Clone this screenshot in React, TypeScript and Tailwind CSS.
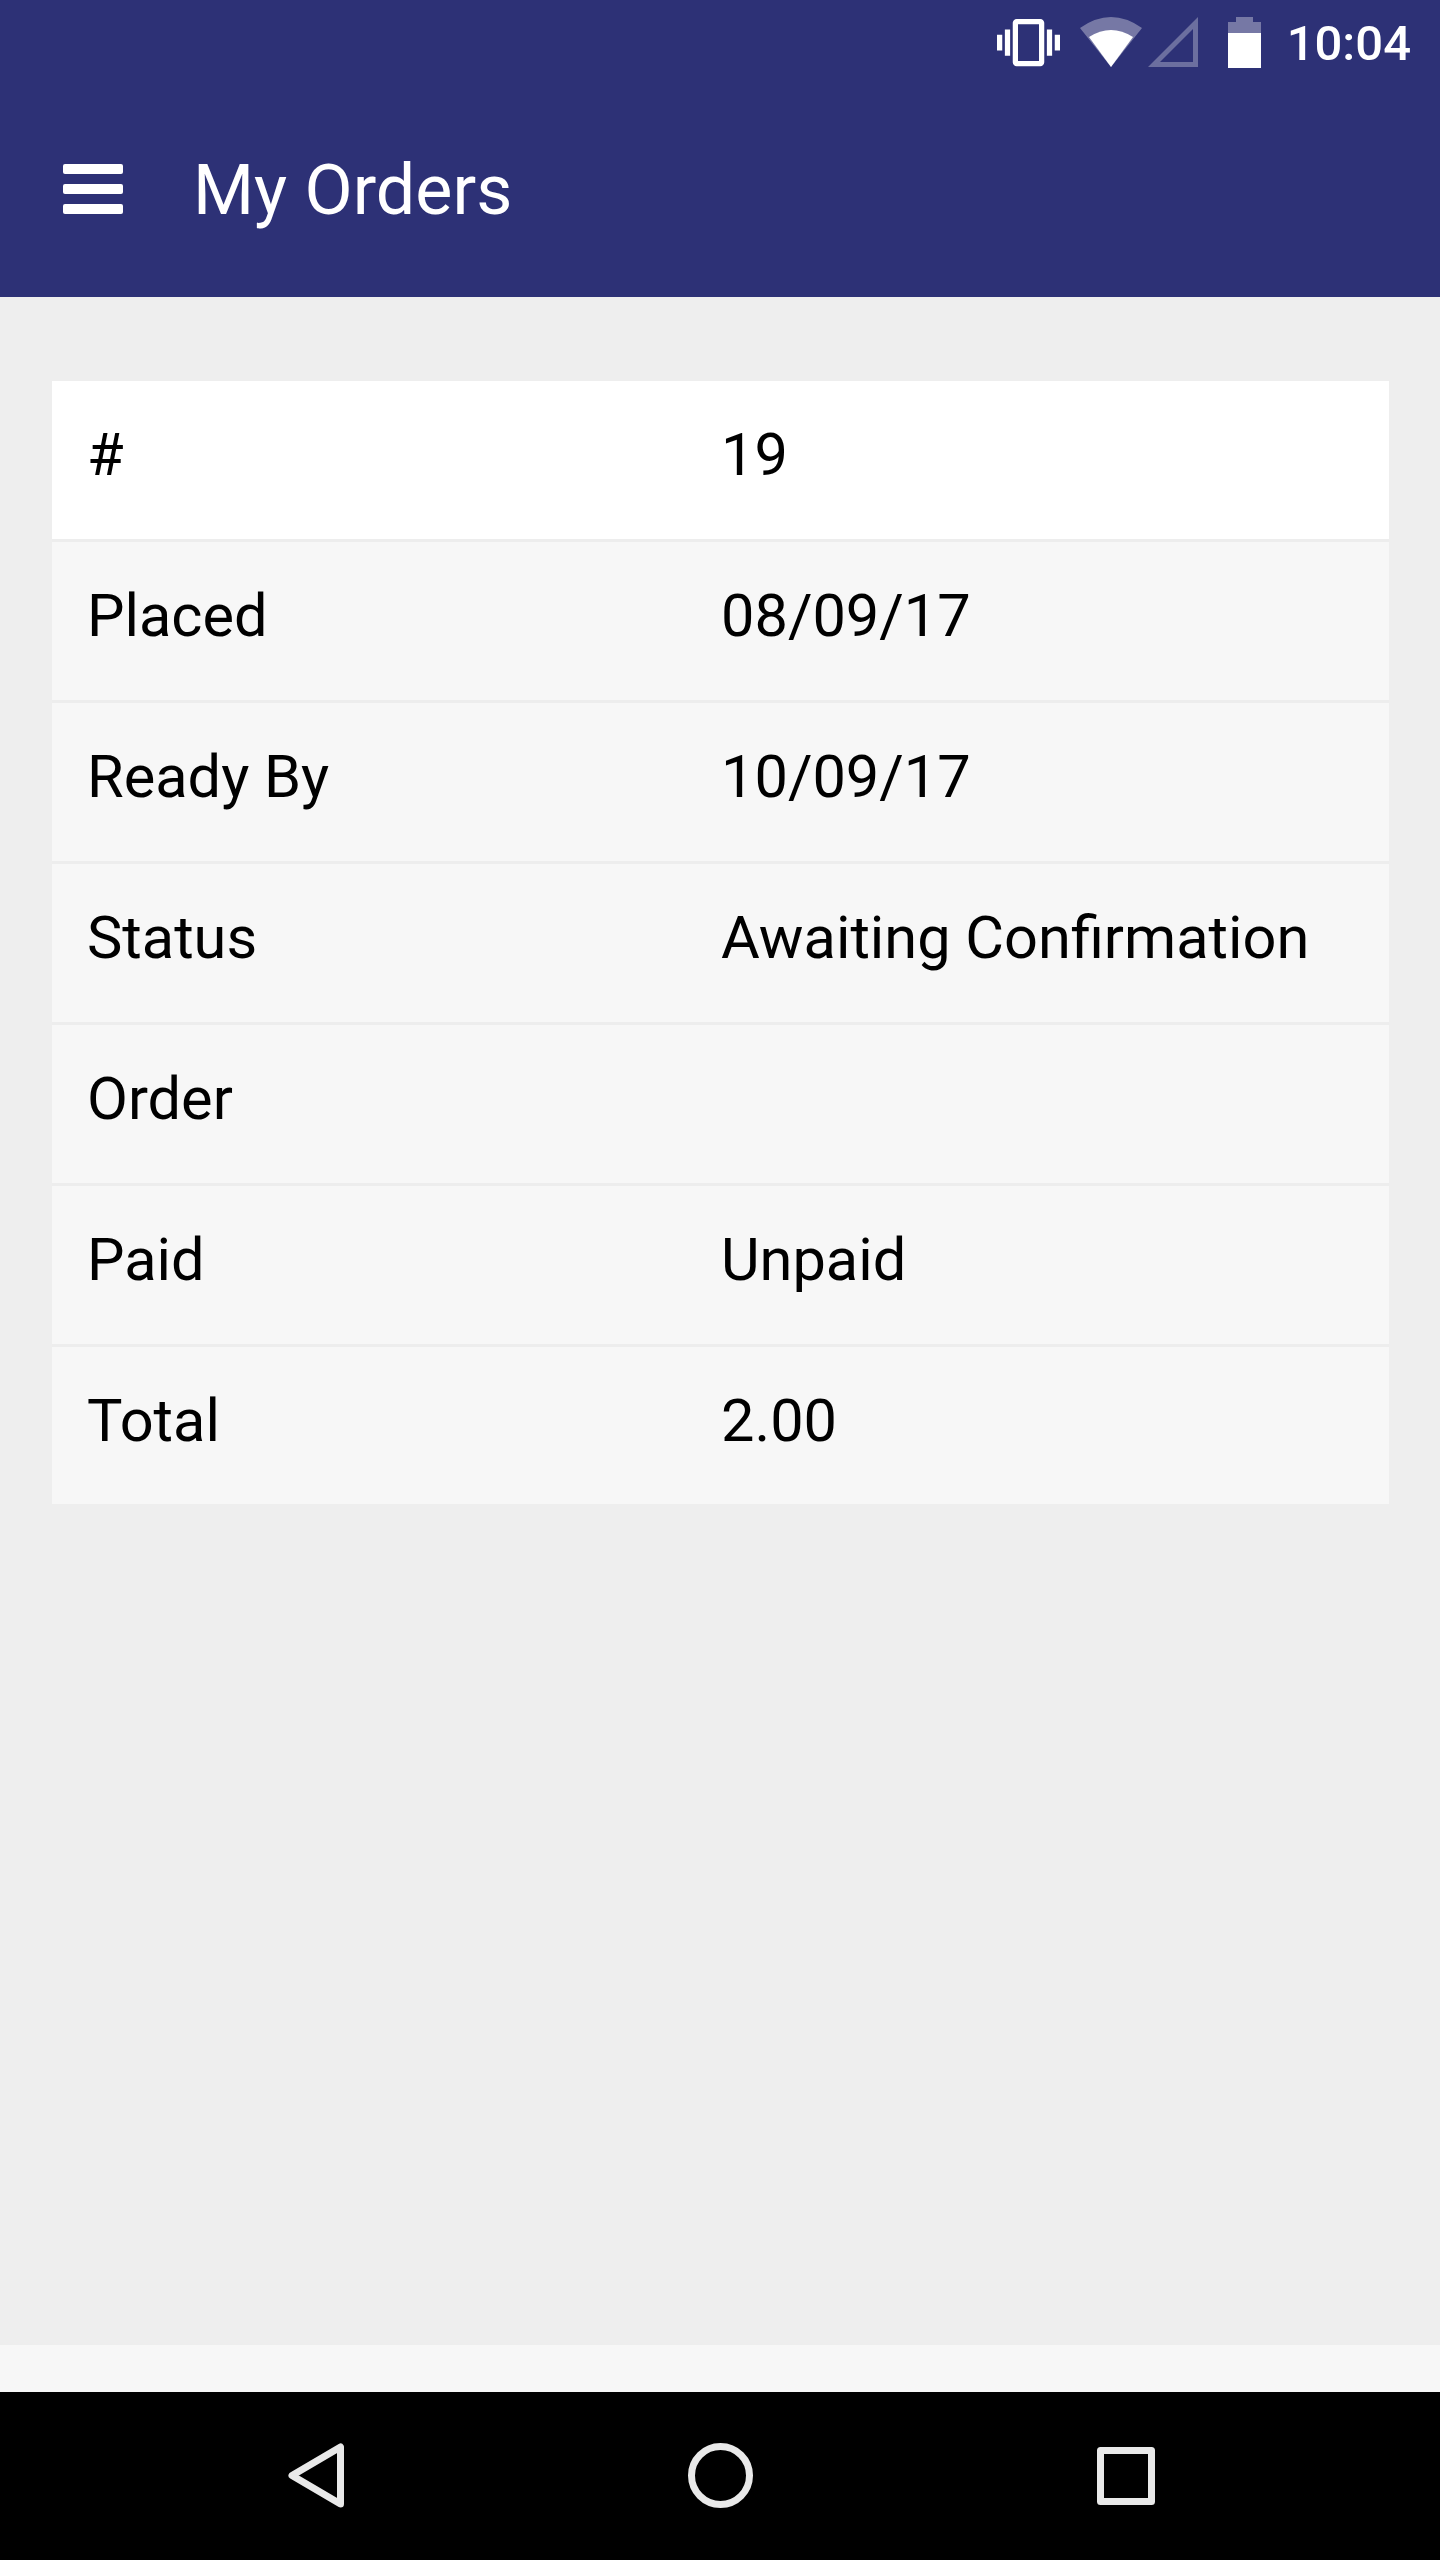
import React from 'react';

const rows = [
  { label: '#', value: '19' },
  { label: 'Placed', value: '08/09/17' },
  { label: 'Ready By', value: '10/09/17' },
  { label: 'Status', value: 'Awaiting Confirmation' },
  { label: 'Order', value: '' },
  { label: 'Paid', value: 'Unpaid' },
  { label: 'Total', value: '2.00' },
];

const StatusIcons = () => (
  <div className="flex items-center">
    {/* vibrate */}
    <svg width="63" height="63" viewBox="0 0 24 24" fill="#fff">
      <path d="M0 15h2V9H0v6zm3 2h2V7H3v10zm19-8v6h2V9h-2zm-3 8h2V7h-2v10zM16.5 3h-9C6.67 3 6 3.67 6 4.5v15c0 .83.67 1.5 1.5 1.5h9c.83 0 1.5-.67 1.5-1.5v-15c0-.83-.67-1.5-1.5-1.5zM16 19H8V5h8v14z" />
    </svg>
    {/* wifi */}
    <svg className="ml-[20px]" width="62" height="50" viewBox="0 0 62 50" fill="#fff">
      <path d="M0 11Q31 -11 62 11L31 50Z" opacity="0.35" />
      <path d="M9 20Q31 6 53 20L31 50Z" />
    </svg>
    {/* signal */}
    <svg className="ml-[6px]" width="50" height="50" viewBox="0 0 50 50" fill="#fff">
      <path d="M0 50L50 0V50ZM12 45H45V12Z" fillRule="evenodd" opacity="0.3" />
    </svg>
    {/* battery */}
    <svg className="ml-[30px]" width="33" height="51" viewBox="0 0 33 51" fill="#fff">
      <path d="M8 0H25V5H33V16H0V5H8Z" opacity="0.35" />
      <rect x="0" y="16" width="33" height="35" />
    </svg>
  </div>
);

const NavBar = () => (
  <div className="flex h-[168px] items-center bg-black pb-[1px]">
    <svg className="ml-[288px]" width="56" height="65" viewBox="0 0 56 65" fill="none" stroke="#e9e9e9" strokeWidth="7" strokeLinejoin="round">
      <path d="M52.5 4V61L4 32.5Z" />
    </svg>
    <svg className="ml-[344px]" width="65" height="65" viewBox="0 0 65 65" fill="none" stroke="#e9e9e9" strokeWidth="7">
      <circle cx="32.5" cy="32.5" r="29" />
    </svg>
    <svg className="ml-[344px]" width="58" height="58" viewBox="0 0 58 58" fill="none" stroke="#e9e9e9" strokeWidth="7" strokeLinejoin="round">
      <rect x="3.5" y="3.5" width="51" height="51" />
    </svg>
  </div>
);

export default function App() {
  return (
    <div className="flex h-[2560px] w-[1440px] flex-col bg-[#eeeeee] font-['Roboto',sans-serif]">
      <header className="h-[297px] bg-[#2d3176] text-white">
        <div className="flex h-[84px] items-center justify-end pr-[29px]">
          <StatusIcons />
          <span className="ml-[26px] pt-[2px] text-[49px] font-medium leading-none">10:04</span>
        </div>
        <div className="flex h-[210px] items-center pl-[63px]">
          <div className="flex w-[60px] flex-col gap-[10px]">
            <div className="h-[10px] rounded-[2px] bg-white" />
            <div className="h-[10px] rounded-[2px] bg-white" />
            <div className="h-[10px] rounded-[2px] bg-white" />
          </div>
          <h1 className="ml-[70px] pt-[2px] text-[70px] leading-none">My Orders</h1>
        </div>
      </header>

      <main className="flex-1 px-[52px] pt-[84px]">
        <div className="w-[1337px] text-[59.5px] leading-none text-black">
          {rows.map((row, i) => (
            <div
              key={row.label}
              className={`grid grid-cols-[634px_1fr] items-center pb-[8px] pl-[35px] ${
                i === 0 ? 'bg-white' : 'bg-[#f7f7f7]'
              } ${i < rows.length - 1 ? 'h-[161px] border-b-[3px] border-[#ededed]' : 'h-[157px]'}`}
            >
              <span>{row.label}</span>
              <span>{row.value}</span>
            </div>
          ))}
        </div>
      </main>

      <div className="h-[47px] bg-[#f7f7f7]" />
      <NavBar />
    </div>
  );
}
